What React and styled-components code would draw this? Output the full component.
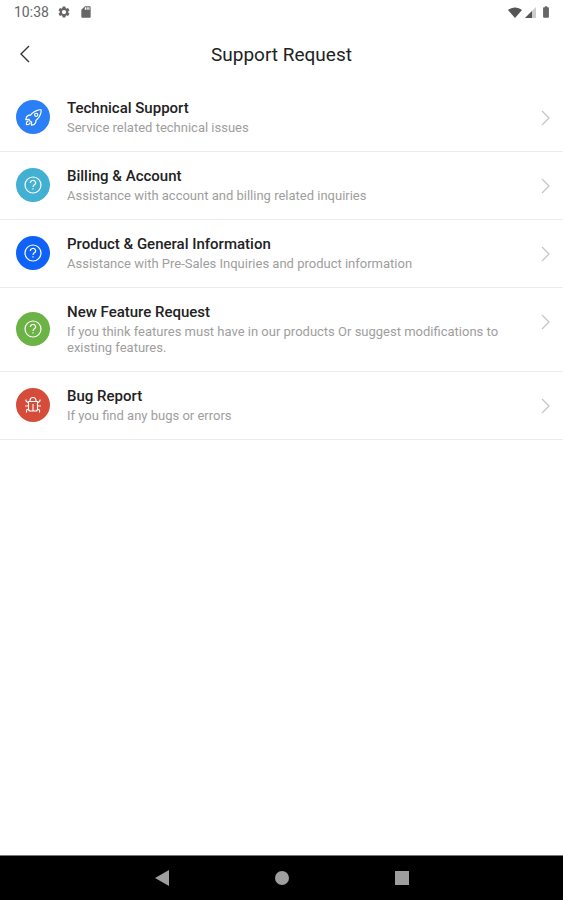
import React from 'react'
import styled, { createGlobalStyle } from 'styled-components'
import { IoRocketOutline } from 'react-icons/io5'
import { MdSettings, MdSdCard, MdBatteryFull } from 'react-icons/md'

const GlobalStyle = createGlobalStyle`
  * {
    box-sizing: border-box;
  }
  body {
    margin: 0;
    background-color: #fff;
    font-family: Roboto, 'Liberation Sans', sans-serif;
  }
`

const Screen = styled.div`
  display: flex;
  flex-direction: column;
  min-height: 100vh;
`

const StatusBar = styled.div`
  display: flex;
  align-items: center;
  justify-content: space-between;
  height: 24px;
  padding: 0 10px 0 14px;
  color: #666;
  font-size: 14px;
`

const StatusGroup = styled.div`
  display: flex;
  align-items: center;
  gap: ${props => props.$gap};
`

const Header = styled.header`
  display: grid;
  grid-template-columns: 50px 1fr 50px;
  align-items: center;
  height: 60px;
`

const BackButton = styled.button`
  display: flex;
  align-items: center;
  justify-content: center;
  height: 40px;
  padding: 0;
  border: none;
  background: none;
  color: #333;
  cursor: pointer;
`

const PageTitle = styled.h1`
  margin: 0;
  color: #222;
  font-size: 19px;
  font-weight: 400;
  text-align: center;
`

const RequestList = styled.ul`
  flex: 1;
  margin: 0;
  padding: 0;
  list-style: none;
`

const RequestLink = styled.a`
  display: flex;
  align-items: center;
  gap: 17px;
  padding: 14px 13px 15px 16px;
  border-bottom: 1px solid #ececec;
  color: inherit;
  text-decoration: none;
`

const IconCircle = styled.span`
  display: flex;
  align-items: center;
  justify-content: center;
  flex: none;
  width: 34px;
  height: 34px;
  border-radius: 50%;
  background-color: ${props => props.$color};
  color: #fff;
`

const RequestText = styled.div`
  flex: 1;
`

const RequestTitle = styled.h2`
  margin: 0 0 2px;
  color: #222;
  font-size: 15px;
  font-weight: 500;
  line-height: 20px;
`

const RequestDescription = styled.p`
  margin: 0;
  color: #9e9e9e;
  font-size: 13px;
  line-height: 16px;
`

const Arrow = styled.span`
  display: flex;
  align-self: flex-start;
  padding-top: 12px;
  color: #c4c4c4;
`

const NavBar = styled.nav`
  display: flex;
  align-items: center;
  justify-content: center;
  gap: 80px;
  height: 45px;
  border-top: 1px solid #777;
  background-color: #000;
`

const NavButton = styled.button`
  display: flex;
  align-items: center;
  justify-content: center;
  width: 40px;
  height: 40px;
  padding: 0;
  border: none;
  background: none;
  color: #9e9e9e;
  cursor: pointer;
`

const QuestionIcon = () => (
  <svg width="18" height="18" viewBox="0 0 18 18" fill="none" stroke="currentColor" strokeWidth="1.2">
    <circle cx="9" cy="9" r="8" />
    <path d="M6.4 7A2.6 2.4 0 1 1 10.4 8.8C9.4 9.5 9 9.8 9 11" />
    <path d="M9 12.2V13.6" />
  </svg>
)

const BugIcon = () => (
  <svg width="18" height="18" viewBox="0 0 18 18" fill="none" stroke="currentColor" strokeWidth="1.1">
    <path d="M6 5V4.5A3 3 0 0 1 12 4.5V5" />
    <path d="M4.5 5.5H13.5V13Q13.5 15 11.5 15H6.5Q4.5 15 4.5 13Z" />
    <path d="M9 8V15" />
    <path d="M4.5 7L2 5V3.5M13.5 7L16 5V3.5M4.5 10H1M13.5 10H17M4.5 13L2.5 14V16.5M13.5 13L15.5 14V16.5" />
  </svg>
)

const requests = [
  {
    title: 'Technical Support',
    description: 'Service related technical issues',
    color: '#2b7ff6',
    icon: <IoRocketOutline size={19} />
  },
  {
    title: 'Billing & Account',
    description: 'Assistance with account and billing related inquiries',
    color: '#42b0d3',
    icon: <QuestionIcon />
  },
  {
    title: 'Product & General Information',
    description: 'Assistance with Pre-Sales Inquiries and product information',
    color: '#0f62f8',
    icon: <QuestionIcon />
  },
  {
    title: 'New Feature Request',
    description: 'If you think features must have in our products Or suggest modifications to existing features.',
    color: '#6ab344',
    icon: <QuestionIcon />
  },
  {
    title: 'Bug Report',
    description: 'If you find any bugs or errors',
    color: '#d54d3a',
    icon: <BugIcon />
  }
]

const App = () => (
  <React.Fragment>
    <GlobalStyle />
    <Screen>
      <StatusBar>
        <StatusGroup $gap="8px">
          <span>10:38</span>
          <MdSettings size={14} />
          <MdSdCard size={14} />
        </StatusGroup>
        <StatusGroup $gap="3px">
          <svg width="14" height="11" viewBox="0 0 14 11">
            <path d="M0 3C4 -.5 10 -.5 14 3L7 11Z" fill="#555" />
          </svg>
          <svg width="11" height="11" viewBox="0 0 11 11">
            <path d="M11 0V11H0Z" fill="#ccc" />
            <path d="M7 4V11H0Z" fill="#555" />
          </svg>
          <MdBatteryFull size={14} />
        </StatusGroup>
      </StatusBar>
      <Header>
        <BackButton aria-label="Back">
          <svg width="10" height="18" viewBox="0 0 10 18" fill="none" stroke="currentColor" strokeWidth="1.4">
            <path d="M9 1L1 9L9 17" />
          </svg>
        </BackButton>
        <PageTitle>Support Request</PageTitle>
      </Header>
      <RequestList>
        {requests.map(request => (
          <li key={request.title}>
            <RequestLink href="#">
              <IconCircle $color={request.color}>{request.icon}</IconCircle>
              <RequestText>
                <RequestTitle>{request.title}</RequestTitle>
                <RequestDescription>{request.description}</RequestDescription>
              </RequestText>
              <Arrow>
                <svg width="10" height="16" viewBox="0 0 10 16" fill="none" stroke="currentColor" strokeWidth="1.2">
                  <path d="M2 1L9 8L2 15" />
                </svg>
              </Arrow>
            </RequestLink>
          </li>
        ))}
      </RequestList>
      <NavBar>
        <NavButton aria-label="Back">
          <svg width="14" height="16" viewBox="0 0 14 16" fill="currentColor">
            <path d="M14 0V16L0 8Z" />
          </svg>
        </NavButton>
        <NavButton aria-label="Home">
          <svg width="14" height="14" viewBox="0 0 14 14" fill="currentColor">
            <circle cx="7" cy="7" r="7" />
          </svg>
        </NavButton>
        <NavButton aria-label="Recent apps">
          <svg width="14" height="14" viewBox="0 0 14 14" fill="currentColor">
            <rect width="14" height="14" />
          </svg>
        </NavButton>
      </NavBar>
    </Screen>
  </React.Fragment>
)

export default App
